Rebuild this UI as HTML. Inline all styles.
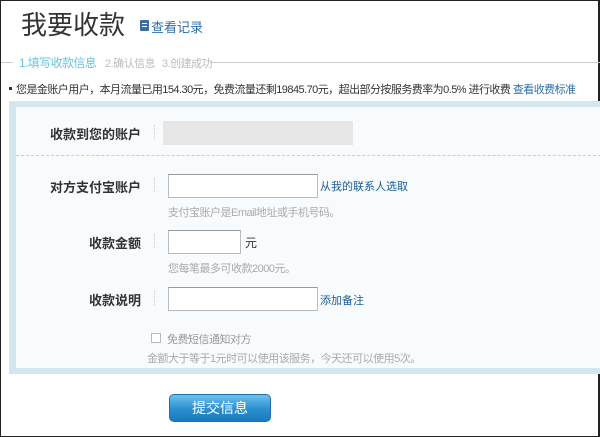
<!DOCTYPE html>
<html><head><meta charset="utf-8"><style>
*{margin:0;padding:0;box-sizing:border-box}
html,body{width:600px;height:437px;overflow:hidden;background:#fff}
body{position:relative;font-family:"Liberation Sans","Noto Sans CJK SC",sans-serif;color:#333;border:1px solid #222;border-right:2px solid #222}
.a{position:absolute;white-space:nowrap}
.lbl{font-size:13px;font-weight:bold;color:#333;text-align:right;width:130px;left:10px}
.hint{font-size:11px;color:#aaa;letter-spacing:-0.5px}
.lnk{font-size:11px;color:#1a5c9a}
.inp{position:absolute;border:1px solid #bbb;border-top-color:#999;background:#fff;height:24px}
.sep{position:absolute;left:153px;width:1px;height:14px;border-left:1px dotted #ccc}
</style></head><body>
<div class="a" style="left:20px;top:4px;font-size:26px;color:#333">我要收款</div>
<div class="a" style="left:139px;top:19px;width:9px;height:11px;background:#3a6ea5;border-radius:1px"></div>
<div class="a" style="left:141px;top:22px;width:5px;height:1px;background:#fff"></div>
<div class="a" style="left:141px;top:25px;width:5px;height:1px;background:#fff"></div>
<div class="a" style="left:150px;top:16px;font-size:13px;color:#2a6fae">查看记录</div>
<div class="a" style="left:0;top:61px;width:12px;height:1px;background:#ccc"></div>
<div class="a" style="left:18px;top:53px;font-size:12px;letter-spacing:-0.6px;color:#6cc3e0">1.填写收款信息</div>
<div class="a" style="left:104px;top:54px;font-size:11px;color:#bbb;letter-spacing:-0.5px">2.确认信息</div>
<div class="a" style="left:161px;top:54px;font-size:11px;color:#bbb;letter-spacing:-0.5px">3.创建成功</div>
<div class="a" style="left:209px;top:61px;width:391px;height:1px;background:#ccc"></div>
<div class="a" style="left:8px;top:86px;width:3px;height:3px;background:#333"></div>
<div class="a" style="left:15px;top:80px;font-size:11px;letter-spacing:-0.55px;color:#333">您是金账户用户，本月流量已用154.30元，免费流量还剩19845.70元，超出部分按服务费率为0.5% 进行收费 <span style="color:#2a6fae">查看收费标准</span></div>
<div class="a" style="left:8px;top:100px;width:592px;height:273px;background:#d4e7ec"></div>
<div class="a" style="left:15px;top:106px;width:585px;height:261px;background:#f8fbfd"></div>
<div class="a lbl" style="top:123px">收款到您的账户</div>
<div class="sep" style="top:124px"></div>
<div class="a" style="left:162px;top:120px;width:190px;height:24px;background:#e6e6e6"></div>
<div class="a" style="left:15px;top:154px;width:585px;border-top:1px dashed #ccc"></div>
<div class="a lbl" style="top:176px">对方支付宝账户</div>
<div class="sep" style="top:177px"></div>
<div class="inp" style="left:167px;top:173px;width:150px"></div>
<div class="a lnk" style="left:319px;top:177px">从我的联系人选取</div>
<div class="a hint" style="left:167px;top:203px">支付宝账户是Email地址或手机号码。</div>
<div class="a lbl" style="top:232px">收款金额</div>
<div class="sep" style="top:233px"></div>
<div class="inp" style="left:167px;top:229px;width:73px"></div>
<div class="a" style="left:244px;top:233px;font-size:12px">元</div>
<div class="a hint" style="left:167px;top:259px">您每笔最多可收款2000元。</div>
<div class="a lbl" style="top:289px">收款说明</div>
<div class="sep" style="top:290px"></div>
<div class="inp" style="left:167px;top:286px;width:150px"></div>
<div class="a lnk" style="left:319px;top:291px">添加备注</div>
<div class="a" style="left:150px;top:332px;width:10px;height:10px;border:1px solid #bbb;background:#fff"></div>
<div class="a hint" style="left:166px;top:330px;color:#999">免费短信通知对方</div>
<div class="a hint" style="left:146px;top:349px">金额大于等于1元时可以使用该服务，今天还可以使用5次。</div>
<div class="a" style="left:168px;top:393px;width:102px;height:28px;border-radius:5px;background:linear-gradient(#6cc2ee,#2a8fd0 55%,#1a78bf);border:1px solid #1e6fae;color:#fff;font-size:14px;text-align:center;line-height:26px">提交信息</div>
</body></html>
